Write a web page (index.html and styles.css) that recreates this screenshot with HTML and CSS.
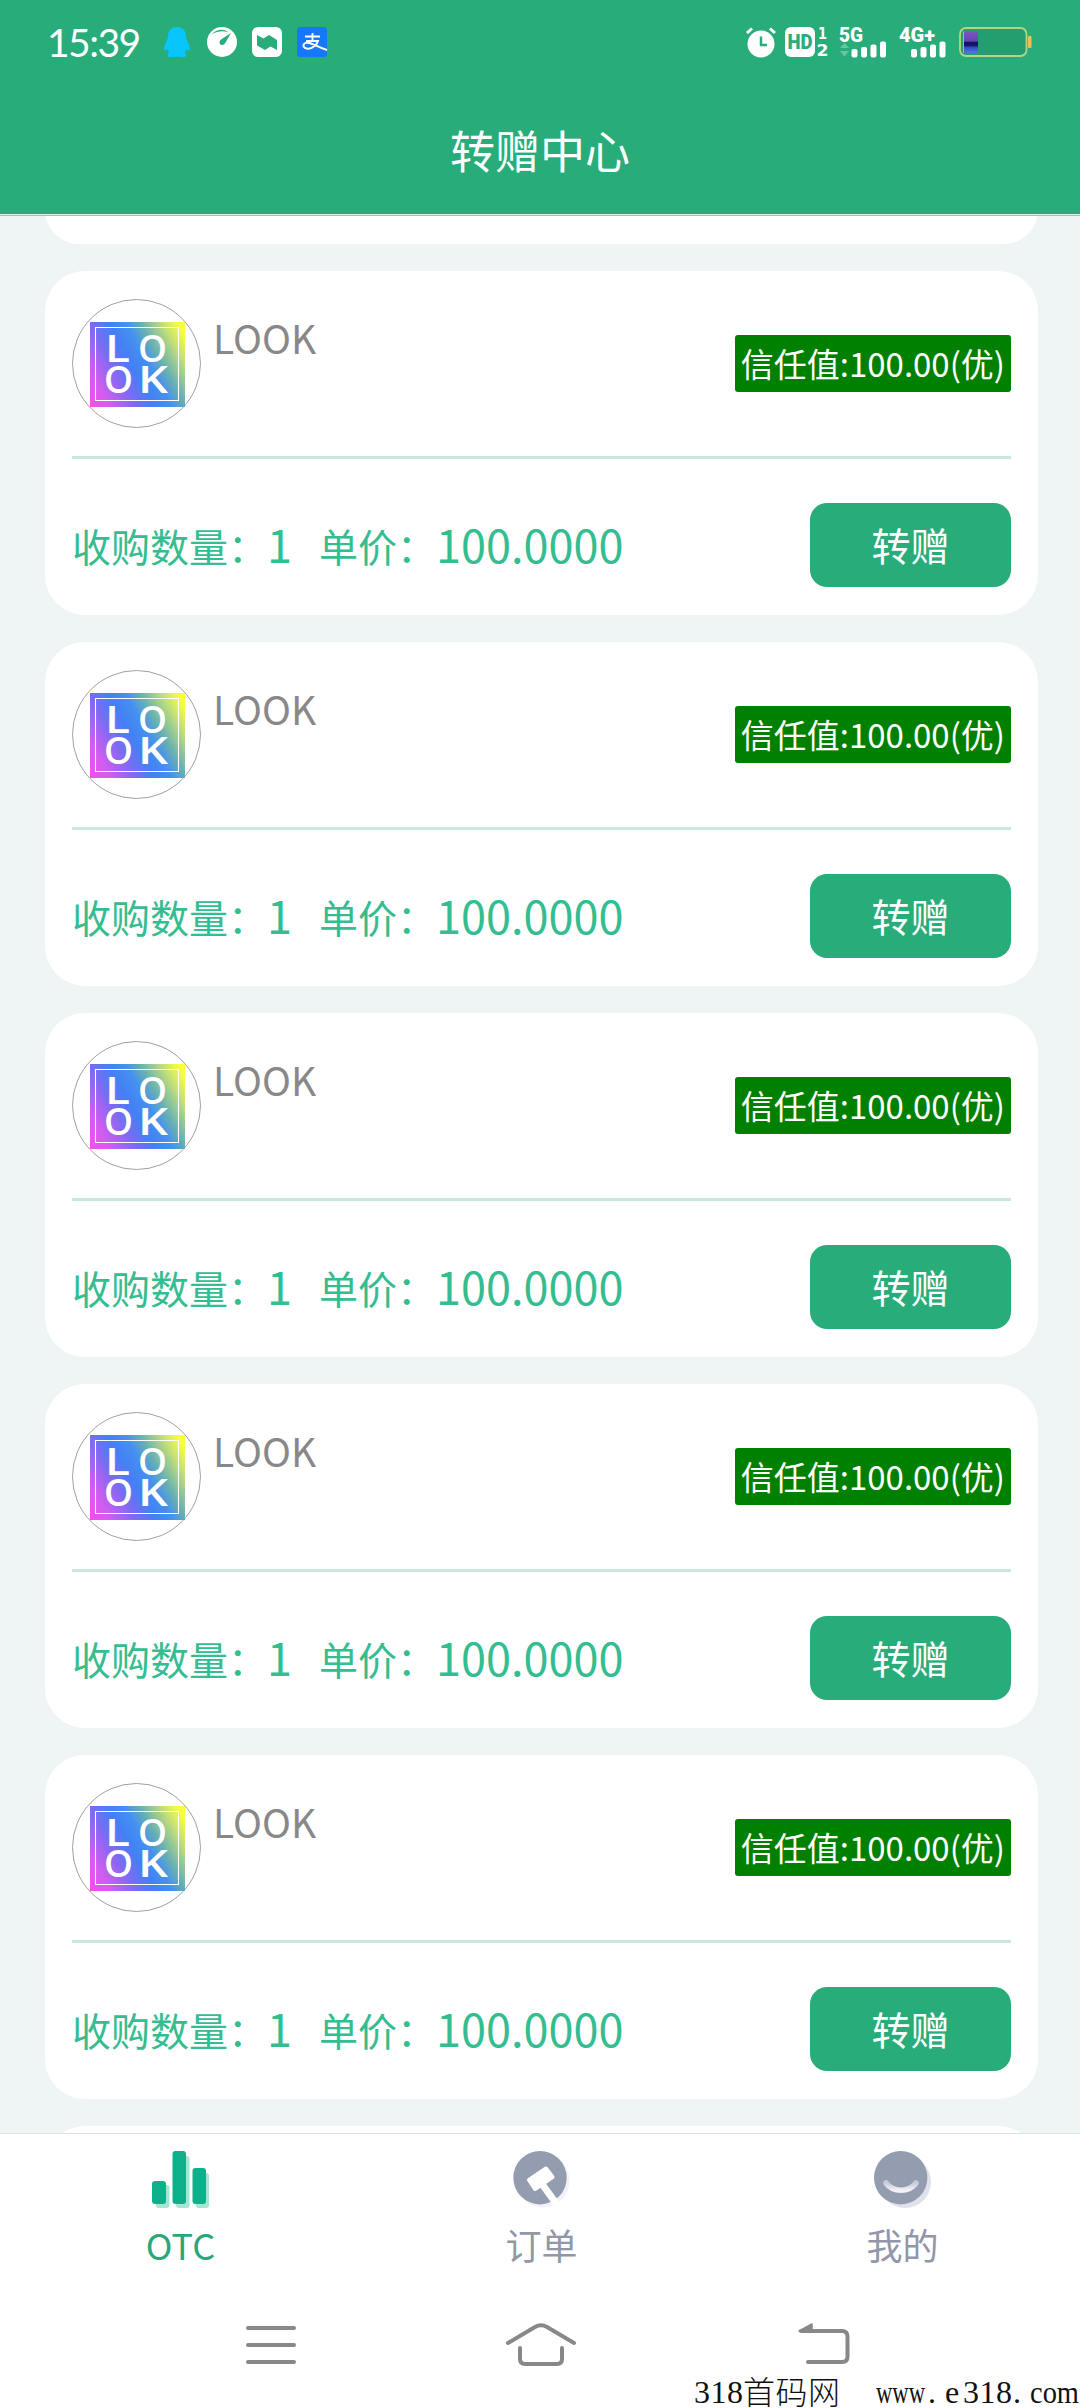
FILE: index.html
```html
<!DOCTYPE html>
<html lang="zh-CN">
<head>
<meta charset="utf-8">
<title>转赠中心</title>
<link rel="stylesheet" href="styles.css">
</head>
<body>
<svg width="0" height="0" class="defs" aria-hidden="true">
  <defs>
    <linearGradient id="rainbow" x1="0" y1="1" x2="1.2" y2="0.4">
      <stop offset="0" stop-color="#f24fe6"/><stop offset=".14" stop-color="#d45cf0"/><stop offset=".32" stop-color="#7f6af3"/><stop offset=".46" stop-color="#4380f5"/><stop offset=".58" stop-color="#4590f0"/><stop offset=".68" stop-color="#66b0b4"/><stop offset=".84" stop-color="#c4e078"/><stop offset=".95" stop-color="#faff3c"/>
    </linearGradient>
    <linearGradient id="charge" x1="0" y1="0" x2="0" y2="1"><stop offset="0" stop-color="#8055b8"/><stop offset=".45" stop-color="#5f48b4"/><stop offset=".5" stop-color="#101458"/><stop offset=".65" stop-color="#17186c"/><stop offset=".75" stop-color="#3050cc"/><stop offset="1" stop-color="#5575d8"/></linearGradient>
    <linearGradient id="smile" x1="0" y1="0" x2="0" y2="1"><stop offset="0" stop-color="#c6cbd6"/><stop offset="1" stop-color="#f2f3f7"/></linearGradient>
    <symbol id="avatar" viewBox="0 0 129 129">
      <circle cx="64.5" cy="64.5" r="64" fill="#fff" stroke="#888" stroke-width=".8"/>
      <path d="M18 23h95v85H18z" fill="url(#rainbow)"/>
      <path d="M23.5 28.5h83v73h-83z" fill="none" stroke="#fff" stroke-width="1.1"/>
      <g class="avatar-text">
        <text x="33" y="62.500" textLength="25" lengthAdjust="spacingAndGlyphs">L</text><text x="66" y="62.500" textLength="29" lengthAdjust="spacingAndGlyphs">O</text>
        <text x="32" y="93.500" textLength="29" lengthAdjust="spacingAndGlyphs">O</text><text x="66" y="93.500" textLength="30" lengthAdjust="spacingAndGlyphs">K</text>
      </g>
    </symbol>
  </defs>
</svg>
<div class="screen">
  <header class="header">
    <div class="status">
      <span class="time">15:39</span>
      <svg class="i-qq" width="26" height="30" viewBox="0 0 26 30"><path d="M13 0C7 0 4 4 4 9c0 2-.6 3-1.400 5C1 17 0 20 .2 22.500c.3 2 2 1.200 3.100-.8.300 1.700 1 3 2 4C3.500 26.500 3 29.800 6 30h5l2-.6 2 .6h5c3-.2 2.500-3.500.7-4.300 1-1 1.700-2.300 2-4 1.100 2 2.800 2.800 3.100.8.200-2.500-.8-5.500-2.400-8.500C22.600 12 22 11 22 9c0-5-3-9-9-9z" fill="#08c6fc"/></svg>
      <svg class="i-gauge" width="30" height="30" viewBox="0 0 30 30"><circle cx="15" cy="15" r="15" fill="#fff"/><path d="M4.500 7.500C9 2 17 1.500 21 5c-6-1.500-11-.7-16.500 2.500z" fill="#28ac79"/><path d="M24 6l-10 6.500c-2.300 2-1.800 5 .8 5.500 2 .2 3.300-1.500 4-3z" fill="#28ac79"/></svg>
      <svg class="i-note" width="30" height="30" viewBox="0 0 30 30"><rect width="30" height="30" rx="6" fill="#fff"/><path d="M5 8l6.500 3.500L17 8l8 5v10l-6.500-3.500-5.500 3.500-8-4.500z" fill="#28ac79"/></svg>
      <svg class="i-pay" width="30" height="30" viewBox="0 0 30 30"><rect width="30" height="30" rx="3" fill="#1677f8"/><path d="M8 9.500h15M15.500 6v8M9 14h12c-1 3.500-5 7.500-9.500 7.700-5 .3-6.500-3.700-3.500-5.500C12.500 14 18 19 30 23" fill="none" stroke="#fff" stroke-width="1.900"/></svg>
      <span class="grow"></span>
      <svg class="i-alarm" width="30" height="31" viewBox="0 0 30 31"><circle cx="15" cy="17" r="13.500" fill="#fff"/><path d="M1 6l5-4.500M29 6l-5-4.500" stroke="#fff" stroke-width="3"/><path d="M15 9.500v8.500h6" fill="none" stroke="#28ac79" stroke-width="2.500"/></svg>
      <svg class="i-hd" width="44" height="30" viewBox="0 0 44 30"><rect width="30" height="30" rx="6" fill="#fff"/><text x="2.500" y="22" textLength="25" lengthAdjust="spacingAndGlyphs" class="hd">HD</text><text x="33" y="12" class="sim" textLength="9" lengthAdjust="spacingAndGlyphs">1</text><text x="31.500" y="29" class="sim" textLength="12" lengthAdjust="spacingAndGlyphs">2</text></svg>
      <svg class="i-5g" width="48" height="31" viewBox="0 0 48 31"><text x="0" y="15" class="net" textLength="24" lengthAdjust="spacingAndGlyphs">5G</text><path d="M1 21l4.500-5 4.500 5zM1 24l4.500 5.500L10 24z" fill="#67c7a2"/><g fill="#fff"><rect x="12.500" y="22" width="6" height="8.500" rx="2"/><rect x="22" y="20" width="6" height="10.500" rx="2"/><rect x="31.500" y="17.500" width="6" height="13" rx="2"/><rect x="41" y="14.500" width="6" height="16" rx="2"/></g></svg>
      <svg class="i-4g" width="48" height="31" viewBox="0 0 48 31"><text x="0" y="15" class="net" textLength="36" lengthAdjust="spacingAndGlyphs">4G+</text><g fill="#fff"><rect x="12" y="22" width="6" height="8.500" rx="2"/><rect x="21.500" y="20" width="6" height="10.500" rx="2"/><rect x="31" y="17.500" width="6" height="13" rx="2"/><rect x="40.500" y="14.500" width="6" height="16" rx="2"/></g></svg>
      <svg class="i-bat" width="73" height="30" viewBox="0 0 73 30"><rect x="1" y="1" width="66.500" height="28" rx="6" fill="#249d6f" stroke="#b5d483" stroke-width="1.800"/><rect x="69" y="9" width="3.500" height="12" rx="1" fill="#e3c35c"/><rect x="4" y="4.500" width="15" height="21.500" fill="url(#charge)"/><path d="M4 4.500h1v21.500H4z" fill="#8fb8e0"/></svg>
    </div>
    <h1 class="title">转赠中心</h1>
  </header>
  <main class="list">
    <div class="card card-above"></div>
    <section class="card"><div class="top"><svg class="avatar"><use href="#avatar"/></svg><span class="name">LOOK</span><span class="badge">信任值:100.00(优)</span></div><div class="bottom"><span class="label">收购数量：</span><span class="num qty">1</span><span class="label">单价：</span><span class="num">100.0000</span><button class="btn">转赠</button></div></section>
    <section class="card"><div class="top"><svg class="avatar"><use href="#avatar"/></svg><span class="name">LOOK</span><span class="badge">信任值:100.00(优)</span></div><div class="bottom"><span class="label">收购数量：</span><span class="num qty">1</span><span class="label">单价：</span><span class="num">100.0000</span><button class="btn">转赠</button></div></section>
    <section class="card"><div class="top"><svg class="avatar"><use href="#avatar"/></svg><span class="name">LOOK</span><span class="badge">信任值:100.00(优)</span></div><div class="bottom"><span class="label">收购数量：</span><span class="num qty">1</span><span class="label">单价：</span><span class="num">100.0000</span><button class="btn">转赠</button></div></section>
    <section class="card"><div class="top"><svg class="avatar"><use href="#avatar"/></svg><span class="name">LOOK</span><span class="badge">信任值:100.00(优)</span></div><div class="bottom"><span class="label">收购数量：</span><span class="num qty">1</span><span class="label">单价：</span><span class="num">100.0000</span><button class="btn">转赠</button></div></section>
    <section class="card"><div class="top"><svg class="avatar"><use href="#avatar"/></svg><span class="name">LOOK</span><span class="badge">信任值:100.00(优)</span></div><div class="bottom"><span class="label">收购数量：</span><span class="num qty">1</span><span class="label">单价：</span><span class="num">100.0000</span><button class="btn">转赠</button></div></section>
    <div class="card card-below"></div>
  </main>
  <nav class="tabs">
    <div class="tab active">
      <svg width="57" height="57" viewBox="0 0 57 57"><g fill="#a5e6d0"><rect x="4" y="34" width="13.500" height="23" rx="3"/><rect x="24" y="5" width="13.500" height="52" rx="3"/><rect x="44" y="22" width="13" height="35" rx="3"/></g><g fill="#0cb08a"><rect y="30" width="14" height="23" rx="3"/><rect x="20.500" width="13.500" height="53" rx="3"/><rect x="40.500" y="17" width="13.500" height="36" rx="3"/></g></svg>
      <span>OTC</span>
    </div>
    <div class="tab">
      <svg width="57" height="57" viewBox="0 0 57 57"><circle cx="30" cy="30" r="26.500" fill="#f0f2f6"/><circle cx="27" cy="26.700" r="26.700" fill="#949db0"/><path d="M16 29L33 17.500l6.500 8.500L22 38z" fill="#fff" stroke="#fff" stroke-width="4" stroke-linejoin="round"/><path d="M29 33l14.500 20" stroke="#fff" stroke-width="7"/></svg>
      <span>订单</span>
    </div>
    <div class="tab">
      <svg width="57" height="57" viewBox="0 0 57 57"><circle cx="31" cy="31" r="26" fill="#dfe2ea"/><circle cx="26.700" cy="26.700" r="26.700" fill="#949db0"/><path d="M12 32c7 9.500 23 9.500 30 0" fill="none" stroke="url(#smile)" stroke-width="5.500" stroke-linecap="round"/></svg>
      <span>我的</span>
    </div>
  </nav>
  <footer class="system">
    <div class="keys">
      <svg class="menu" width="50" height="38" viewBox="0 0 50 38"><path d="M2 2h46M2 19h46M2 36h46"/></svg>
      <svg class="home" width="70" height="44" viewBox="0 0 70 44"><path d="M2 20L29 4q6-3.500 12 0L68 20M14 25v11q0 5 5 5h32q5 0 5-5V25"/></svg>
      <svg class="back" width="52" height="42" viewBox="0 0 52 42"><path d="M3 8h41q5.500 0 5.500 5.500v20q0 5.500-5.500 5.500H10"/><path d="M1 8L14 1v8z" fill="#888" stroke-width="1.500" stroke-linejoin="round"/></svg>
    </div>
    <svg class="mark" width="390" height="34" viewBox="0 0 390 34"><text x="4" y="27" textLength="49">318</text><text class="cjk" x="53" y="27.500" textLength="97">首码网</text><text y="27" x="186" textLength="49" lengthAdjust="spacingAndGlyphs">www</text><text y="27" x="238">.</text><text y="27" x="255">e</text><text y="27" x="273" textLength="49">318</text><text y="27" x="323">.</text><text y="27" x="340" textLength="49" lengthAdjust="spacingAndGlyphs">com</text></svg>
  </footer>
</div>
</body>
</html>
```
FILE: styles.css
```css
* { box-sizing: border-box; }
body { margin: 0; font-family: "Noto Sans CJK SC", "Noto Sans", sans-serif; }
svg { display: block; flex: none; overflow: visible; }
.defs { position: absolute; }
.screen { width: 1080px; height: 2408px; display: flex; flex-direction: column; overflow: hidden; background: #fff; }
.header { flex: none; height: 216px; background: #28ac79; color: #fff; border-bottom: 1px solid #8ccdb3; box-shadow: inset 0 -1px #dcf3e9; }
.status { height: 84px; display: flex; align-items: center; padding: 0 48px 0 47px; }
.time { width: 117px; font: 39px/1 Lato, sans-serif; letter-spacing: -1.5px; }
.grow { flex: 1; }
.i-qq { margin-right: 17px; }
.i-gauge, .i-note { margin-right: 15px; }
.i-alarm { margin-right: 9px; }
.i-hd { margin-right: 10px; }
.i-5g, .i-4g { margin-right: 12px; }
.hd { font: 900 20px Roboto, sans-serif; fill: #28ac79; }
.sim { font: 700 16px "DejaVu Sans", sans-serif; fill: #fff; }
.net { font: 900 20px Roboto, sans-serif; fill: #fff; }
.title { margin: 0; padding-top: 30px; text-align: center; font-size: 45px; line-height: 72px; font-weight: 400; }
.list { flex: none; height: 1917px; overflow: hidden; background: #eff5f5; padding: 0 42px 0 45px; display: flex; flex-direction: column; gap: 27px; }
.card { flex: none; height: 344px; border-radius: 40px; background: #fff; padding: 28px 27px; }
.card-above { height: 68px; margin-top: -40px; padding: 0; }
.card-below { height: 80px; padding: 0; }
.top { height: 160px; display: flex; border-bottom: 3px solid #c8e8dd; }
.avatar { width: 129px; height: 129px; }
.avatar-text { font: 600 37.5px "Open Sans", sans-serif; fill: #fff; }
.name { margin-left: 12px; line-height: 58px; padding-top: 9px; font-size: 39px; color: #888; flex: 1; }
.badge { height: 57px; margin-top: 36px; border-radius: 3px; padding: 0 6px; background: #008000; color: #fff; font-size: 33px; line-height: 57px; white-space: nowrap; }
.bottom { height: 128px; padding-top: 44px; display: flex; align-items: flex-start; color: #34bd90; white-space: nowrap; }
.label { font-size: 39px; line-height: 84px; }
.num { font-size: 45px; line-height: 82px; }
.qty { margin-right: 27px; }
.btn { margin-left: auto; width: 201px; height: 84px; border: 0; border-radius: 17px; background: #28ac79; color: #fff; font: 39px/82px "Noto Sans CJK SC", sans-serif; padding: 0 0 2px; }
.tabs { flex: none; height: 147px; border-top: 1px solid #dfe1e1; display: grid; grid-template-columns: repeat(3, 361px); color: #9196a8; font-size: 36px; }
.tab { display: flex; flex-direction: column; align-items: center; padding-top: 17px; }
.tab span { margin-top: 9px; line-height: 54px; }
.active { color: #29a777; }
.system { flex: 1; display: flex; flex-direction: column; align-items: flex-end; }
.keys { width: 100%; height: 96px; padding: 43px 0 0 246px; display: flex; align-items: flex-start; }
.keys svg { fill: none; stroke: #888; stroke-width: 4; stroke-linecap: round; }
.keys .menu { margin: 3px 210px 0 0; }
.keys .home { margin-right: 222px; }
.mark { font: 32px "Liberation Serif", serif; fill: #111; }
.cjk { font: 300 32px "Noto Sans CJK SC", sans-serif; }
```
